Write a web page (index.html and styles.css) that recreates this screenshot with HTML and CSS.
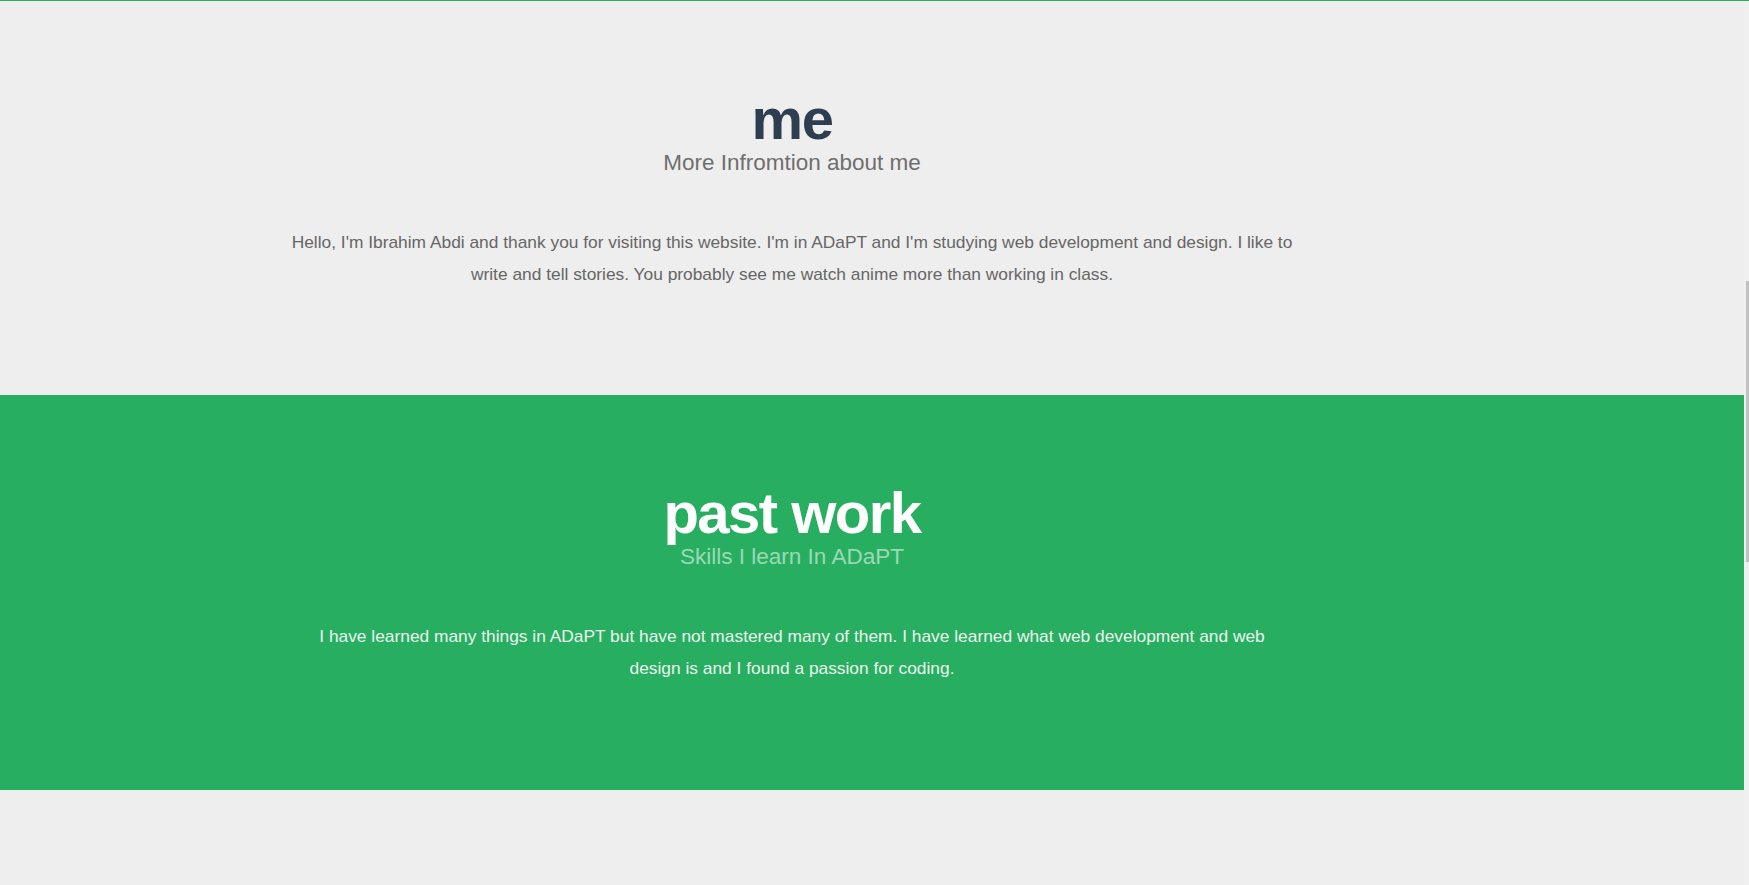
FILE: index.html
```html
<!DOCTYPE html>
<html lang="en">
<head>
<meta charset="utf-8">
<title>Ibrahim Abdi</title>
<link rel="stylesheet" href="styles.css">
</head>
<body>
<div class="topline"></div>
<div class="page">
  <main class="main">
    <section class="section section-light">
      <div class="inner">
        <h1 class="title">me</h1>
        <h2 class="subtitle">More Infromtion about me</h2>
        <p class="text">Hello, I'm Ibrahim Abdi and thank you for visiting this website. I'm in ADaPT and I'm studying web development and design. I like to write and tell stories. You probably see me watch anime more than working in class.</p>
      </div>
    </section>
    <section class="section section-green">
      <div class="inner">
        <h1 class="title">past work</h1>
        <h2 class="subtitle">Skills I learn In ADaPT</h2>
        <p class="text text-narrow">I have learned many things in ADaPT but have not mastered many of them. I have learned what web development and web design is and I found a passion for coding.</p>
      </div>
    </section>
    <section class="section section-light section-tail"></section>
  </main>
  <div class="track"></div>
</div>
<div class="thumb"></div>
</body>
</html>
```
FILE: styles.css
```css
html, body {
  margin: 0;
  padding: 0;
  background: #eeeeee;
  font-family: "Liberation Sans", Arial, sans-serif;
  overflow: hidden;
}

.topline {
  height: 1px;
  background: #27ae60;
}

.page {
  display: flex;
}

.main {
  flex: 1;
  min-width: 0;
}

.track {
  width: 5px;
  background: #f0f0f0;
}

.thumb {
  position: fixed;
  right: 0;
  top: 281px;
  width: 3px;
  height: 281px;
  background: #c1c1c1;
}

.section {
  height: 394px;
  box-sizing: border-box;
  padding-top: 88px;
}

.section-green {
  height: 395px;
  background: #27ae60;
}

.section-light {
  background: #eeeeee;
}

.section-tail {
  height: 120px;
  padding: 0;
}

.inner {
  width: 1584px;
  display: flex;
  flex-direction: column;
  align-items: center;
  text-align: center;
}

.title {
  margin: 0;
  font-size: 58px;
  line-height: 60px;
  font-weight: bold;
  letter-spacing: -1.5px;
  color: #2c3e50;
}

.subtitle {
  margin: 2px 0 0;
  font-size: 22.5px;
  line-height: 24px;
  font-weight: normal;
  color: #6e6e6e;
}

.text {
  margin: 51px 0 0;
  max-width: 1010px;
  font-size: 17.35px;
  line-height: 32px;
  color: #666666;
}

.text-narrow {
  max-width: 980px;
}

.section-green .title {
  color: #ffffff;
}

.section-green .subtitle {
  color: rgba(255, 255, 255, 0.55);
}

.section-green .text {
  color: #eaf6ee;
}
```
